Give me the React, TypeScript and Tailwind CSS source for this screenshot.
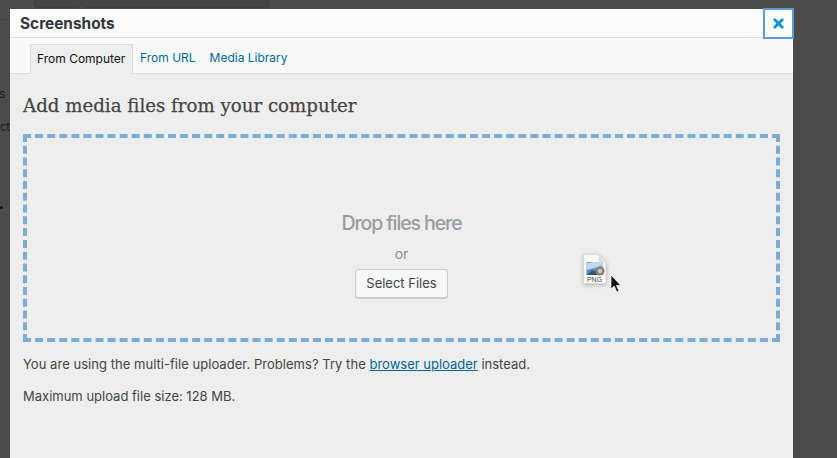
import { X } from "lucide-react";

const uiFont = "font-['Inter','Liberation_Sans',sans-serif]";

function DragGhost() {
  return (
    <svg width="50" height="48" viewBox="0 0 50 48" className="absolute left-[578px] top-[250px]">
      <path d="M5.5 4.5h15l7.5 8V33.5H5.5z" fill="#fbfbfb" stroke="#d4d4d4" strokeWidth="0.8" style={{ filter: "drop-shadow(0 1px 2px rgba(0,0,0,0.25))" }} />
      <path d="M20.5 4.5v8h7.5z" fill="#e0e0e0" />
      <rect x="8.5" y="12" width="16" height="13" fill="#5a8fc4" />
      <path d="M8.5 13l8-1h8v4L8.5 20z" fill="#c2d8ec" />
      <path d="M8.5 25l6-5 5 2 5 3z" fill="#39557a" />
      <circle cx="22" cy="21" r="4.5" fill="#7f7e76" />
      <circle cx="22" cy="21" r="2.2" fill="#cfcabb" />
      <text x="16.5" y="31.5" textAnchor="middle" fontSize="7" fontWeight="500" fontFamily="Liberation Sans, sans-serif" fill="#444">PNG</text>
      <path d="M33 25v14l3.2-3 2.6 6 2.2-1-2.6-5.6h4.4z" fill="#111" stroke="#fff" strokeWidth="0.7" />
    </svg>
  );
}

export default function App() {
  return (
    <div className={`relative h-[458px] w-[837px] overflow-hidden bg-[#4c4c4c] ${uiFont}`}>
      {/* dimmed page behind the modal */}
      <div className="flex h-[9px] pl-[34px]">
        <div className="h-[8px] w-[47px] rounded-b-sm border border-t-0 border-[#404040] bg-[#464646]" />
        <div className="ml-px h-[8px] w-[187px] rounded-b-sm border border-t-0 border-[#404040] bg-[#464646]" />
      </div>
      <div className="flex h-[449px]">
        <div className="w-[10px] overflow-hidden text-[12px] leading-none text-[#1c1c1c]">
          <div className="mt-[10px] h-px bg-[#444444]" />
          <div className="mt-[68px] -ml-px">s</div>
          <div className="mt-[21px] whitespace-nowrap tracking-tighter">ct</div>
          <div className="mt-[73px] h-[3px] w-[3px] rounded-full bg-[#111]" />
        </div>

        <div className="flex w-[783px] flex-col bg-[#eeeeee]">
          <header className="relative flex h-[29px] items-center border-b border-[#dddddd] bg-[#fcfcfc] pl-[10px]">
            <h1 className="mt-[1px] text-[15.4px] font-bold text-[#32373c]">Screenshots</h1>
            <button className="absolute -right-px -top-px flex h-[31px] w-[31px] items-center justify-center border-2 border-[#5b9dd9] bg-[#fcfcfc]">
              <X className="h-[15px] w-[15px] text-[#0a96c8]" strokeWidth={4.5} />
            </button>
          </header>

          <nav className="flex h-[36px] items-end border-b border-[#dddddd] bg-[#f9f9f9] pl-[20px] text-[12px]">
            <span className="-mb-px flex h-[30px] w-[103px] items-center border border-b-0 border-[#dddddd] bg-[#eeeeee] px-[6px] pb-[2px] text-[#111]">From Computer</span>
            <a className="flex h-[29px] items-center pb-[1px] pl-[7px] text-[#0068a0]">From URL</a>
            <a className="flex h-[29px] items-center pb-[1px] pl-[14px] text-[#0068a0]">Media Library</a>
          </nav>

          <main className="flex flex-1 flex-col pl-[13px] pr-[13px]">
            <h2 className="mt-[18px] text-[18.2px] leading-[27px] font-['DejaVu_Serif',serif] text-[#444] [-webkit-text-stroke:0.25px_#444]">Add media files from your computer</h2>
            <div className="mt-[15px] flex h-[208px] w-[757px] flex-col items-center border-4 border-dashed border-[#7aaed8]">
              <p className="mt-[73px] text-[19.5px] font-medium leading-[24px] tracking-[-1.1px] text-[#9a9d9f]">Drop files here</p>
              <p className="mt-[9px] text-[14px] leading-[20px] text-[#8d8d8d]">or</p>
              <button className="mt-[5px] h-[29px] w-[93px] rounded-[3px] border border-[#cccccc] bg-[#f7f7f7] text-[13px] text-[#444] shadow-[0_1px_0_#cccccc]">Select Files</button>
            </div>
            <p className="mt-[13px] text-[13px] leading-[18px] text-[#444]">
              <span className="tracking-[0.035px]">You are using the multi-file uploader. Problems? Try the </span><a className="text-[#00669b] underline">browser uploader</a> instead.
            </p>
            <p className="mt-[14px] text-[13px] leading-[18px] text-[#444]">Maximum upload file size: 128 MB.</p>
          </main>
        </div>
      </div>
      <DragGhost />
    </div>
  );
}
